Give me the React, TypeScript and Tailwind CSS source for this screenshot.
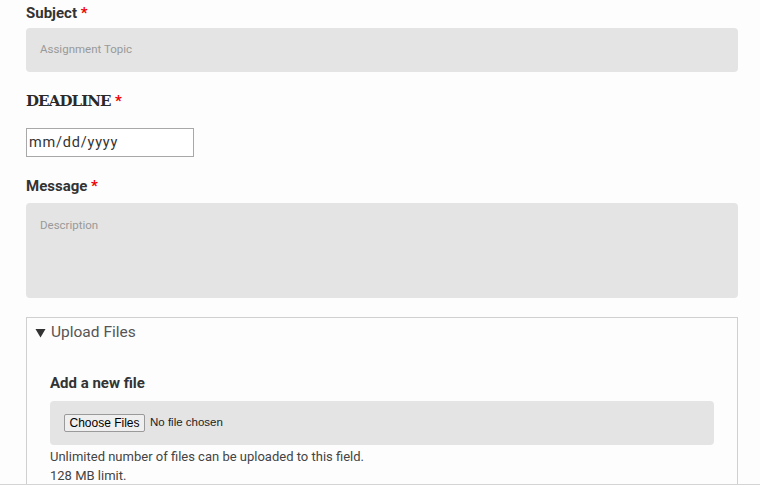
export default function App() {
  const roboto = { fontFamily: 'Roboto, "Noto Sans", sans-serif' } as const;
  const arial = { fontFamily: '"Liberation Sans", Arial, sans-serif' } as const;
  return (
    <div
      className="w-[760px] h-[485px] overflow-hidden bg-[#fdfdfd] border-b border-[#d4d4d4] text-[#333]"
      style={roboto}
    >
      <div className="pl-[26px] pr-[22px]">
        <div className="mt-[3px] leading-[20px] text-[15px] font-bold text-[#333]">
          Subject <span className="text-[#e00]">*</span>
        </div>
        <div className="mt-[5px] h-[44px] rounded-[4px] bg-[#e4e4e4] flex items-center pl-[14px] text-[11.5px] text-[#999]">
          Assignment Topic
        </div>

        <div
          className="mt-[19px] leading-[20px] text-[15px] font-bold text-[#2a2a2a] tracking-[-0.9px]"
          style={{ fontFamily: '"DejaVu Serif", serif' }}
        >
          DEADLINE <span className="text-[#e00] text-[15px] tracking-normal" style={roboto}>*</span>
        </div>
        <div className="mt-[17px] w-[168px] h-[29px] border border-[#a8a8a8] bg-white flex items-center pl-[2px] text-[14.5px] text-[#333] tracking-[0.8px]">
          mm/dd/yyyy
        </div>

        <div className="mt-[19px] leading-[20px] text-[15px] font-bold text-[#333]">
          Message <span className="text-[#e00]">*</span>
        </div>
        <div className="mt-[7px] h-[95px] rounded-[4px] bg-[#e4e4e4] pl-[14px] pt-[15px] text-[11.5px] leading-[14px] text-[#999]">
          Description
        </div>

        <div className="mt-[19px] border border-[#d0d0d0] h-[200px] pl-[23px] pr-[23px]">
          <div className="h-[28px] pt-[1px] flex items-center -ml-[15px] text-[15.5px] text-[#555]">
            <svg width="11" height="10" viewBox="0 0 11 10" className="mr-[5px]">
              <path d="M0.5 1 L10.5 1 L5.5 9.5 Z" fill="#333" />
            </svg>
            Upload Files
          </div>
          <div className="mt-[27px] leading-[20px] text-[15px] font-bold text-[#333]">
            Add a new file
          </div>
          <div className="mt-[8px] h-[44px] rounded-[4px] bg-[#e4e4e4] flex items-center pl-[14px]">
            <div
              className="h-[18px] w-[81px] flex items-center justify-center border border-[#9a9a9a] rounded-[2px] bg-[#efefef] text-[12px] text-black"
              style={arial}
            >
              Choose Files
            </div>
            <span className="ml-[5px] text-[11.5px] text-[#222]" style={arial}>
              No file chosen
            </span>
          </div>
          <div className="mt-[2px] text-[13px] leading-[19px] text-[#444]">
            <div>Unlimited number of files can be uploaded to this field.</div>
            <div>128 MB limit.</div>
          </div>
        </div>
      </div>
    </div>
  );
}
